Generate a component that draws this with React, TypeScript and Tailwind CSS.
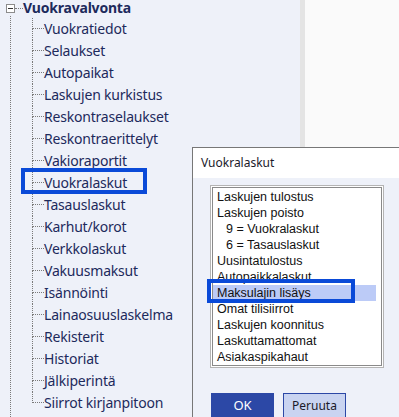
import React from "react";

const TREE_ITEMS = [
  "Vuokratiedot",
  "Selaukset",
  "Autopaikat",
  "Laskujen kurkistus",
  "Reskontraselaukset",
  "Reskontraerittelyt",
  "Vakioraportit",
  "Vuokralaskut",
  "Tasauslaskut",
  "Karhut/korot",
  "Verkkolaskut",
  "Vakuusmaksut",
  "Isännöinti",
  "Lainaosuuslaskelma",
  "Rekisterit",
  "Historiat",
  "Jälkiperintä",
  "Siirrot kirjanpitoon",
];

const LIST_ITEMS: { label: string; indent?: boolean; selected?: boolean }[] = [
  { label: "Laskujen tulostus" },
  { label: "Laskujen poisto" },
  { label: "9 = Vuokralaskut", indent: true },
  { label: "6 = Tasauslaskut", indent: true },
  { label: "Uusintatulostus" },
  { label: "Autopaikkalaskut" },
  { label: "Maksulajin lisäys", selected: true },
  { label: "Omat tilisiirrot" },
  { label: "Laskujen koonnitus" },
  { label: "Laskuttamattomat" },
  { label: "Asiakaspikahaut" },
];

function TreeRow({ label, last }: { label: string; last: boolean }) {
  return (
    <div className="flex h-[22px]">
      <div className="w-[12px] flex flex-col shrink-0">
        <div className="h-[11px] border-l border-b border-dotted border-[#7a7a7a]" />
        <div className={last ? "flex-1" : "flex-1 border-l border-dotted border-[#7a7a7a]"} />
      </div>
      <span className="text-[14px] tracking-[-0.2px] leading-[22px] text-[#1d2a5c] whitespace-nowrap">{label}</span>
    </div>
  );
}

function Dialog() {
  return (
    <div className="absolute left-[192px] top-[147px] w-[230px] h-[300px] border border-[#777777] bg-[#eef1f9] font-['Noto_Sans',sans-serif]">
      {/* title bar */}
      <div className="h-[30px] bg-white flex items-center justify-between pl-[8px] pr-[6px]">
        <span className="text-[12px] text-[#1a1a2a]">Vuokralaskut</span>
        <svg width="12" height="12" viewBox="0 0 12 12" className="mr-[1px]">
          <path d="M1 1 L11 11 M11 1 L1 11" stroke="#222" strokeWidth="1" />
        </svg>
      </div>
      <div className="pl-[17px] pt-[7px]">
        {/* listbox */}
        <div className="w-[174px] h-[183px] border border-[#b4b4b4] bg-white">
          <div className="w-full h-full border border-white">
            <div className="w-full h-full border border-[#8a8a8a] pt-[1px] font-['Liberation_Sans',Arial,sans-serif] text-[12.5px] text-[#111]">
              {LIST_ITEMS.map((it) => (
                <div
                  key={it.label}
                  className={`h-[16px] leading-[16px] mr-[5px] ${it.indent ? "pl-[13px]" : "pl-[4px]"} ${
                    it.selected ? "bg-[#bccbf7]" : ""
                  }`}
                >
                  {it.label}
                </div>
              ))}
            </div>
          </div>
        </div>
        {/* buttons */}
        <div className="flex gap-[9px] mt-[25px] ml-[1px]">
          <div className="w-[63px] h-[26px] bg-[#2c48a6] text-white text-[13px] flex items-center justify-center">OK</div>
          <div className="w-[63px] h-[26px] bg-[#c9d4f1] border border-[#2c48a6] text-[#1a1a2a] text-[12px] flex items-center justify-center">
            Peruuta
          </div>
        </div>
      </div>
    </div>
  );
}

export default function App() {
  return (
    <div className="relative w-[399px] h-[417px] overflow-hidden flex bg-[#fafafa] font-['Noto_Sans',sans-serif]">
      {/* Tree panel */}
      <div className="w-[300px] h-full bg-[#eef1f9] shrink-0">
        <div className="flex items-center h-[16px]">
          <div className="ml-[6px] w-[9px] h-[9px] border border-[#8c8c8c] bg-white flex items-center justify-center">
            <div className="w-[5px] h-px bg-[#333]" />
          </div>
          <div className="w-[8px] border-t border-dotted border-[#7a7a7a]" />
          <span className="text-[14px] tracking-[-0.2px] font-bold text-[#1d2a5c] leading-[16px]">Vuokravalvonta</span>
        </div>
        <div className="ml-[10px] border-l border-dotted border-[#7a7a7a] pl-[21px] pt-[2px] h-[401px]">
          {TREE_ITEMS.map((t, i) => (
            <TreeRow key={t} label={t} last={i === TREE_ITEMS.length - 1} />
          ))}
        </div>
      </div>
      <div className="w-[5px] h-full bg-[#e4e4e4] shrink-0" />
      <div className="flex-1 h-full bg-[#fafafa]" />

      {/* highlight annotation on tree */}
      <div className="absolute left-[21px] top-[168px] w-[126px] h-[26px] border-[4px] border-[#0a4ad8]" />

      <Dialog />

      {/* highlight annotation in list */}
      <div className="absolute left-[207px] top-[279px] w-[148px] h-[24px] border-[4px] border-[#0a4ad8]" />
    </div>
  );
}
